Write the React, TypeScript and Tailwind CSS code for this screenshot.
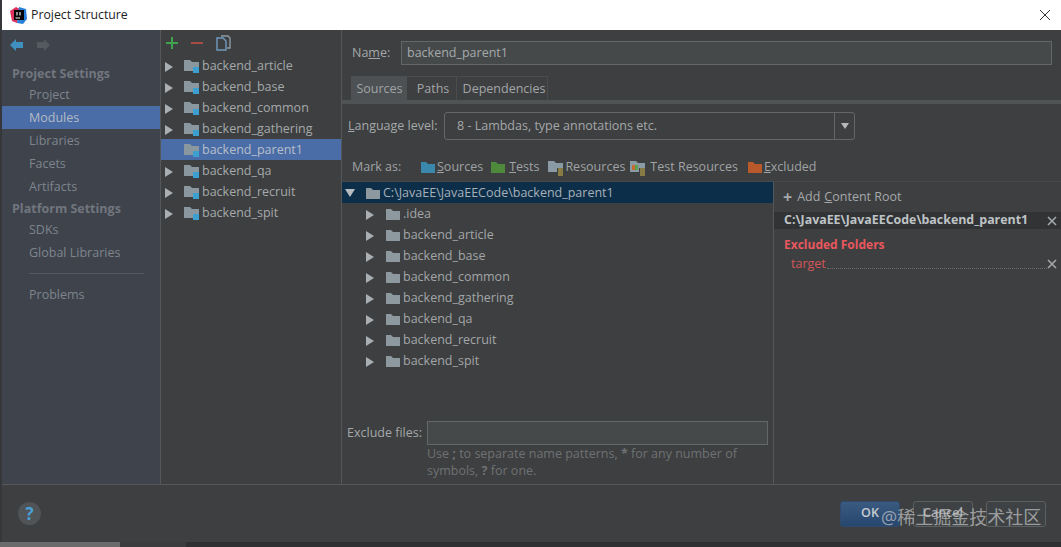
import React from "react";

function Folder({ color = "#8e989f" }: { color?: string }) {
  return (
    <svg width="16" height="13" viewBox="0 0 16 13" className="shrink-0">
      <path d="M1 1h5l2 2h7v9H1z" fill={color} />
    </svg>
  );
}

function ModuleFolder() {
  return (
    <svg width="16" height="15" viewBox="0 0 16 15" className="shrink-0">
      <path d="M0 1h6l2 2h7v9H0z" fill="#8a979f" />
      <rect x="9" y="8" width="6" height="6" fill="#3d9fd0" />
    </svg>
  );
}

function Resource({ test }: { test?: boolean }) {
  return (
    <svg width="16" height="16" viewBox="0 0 16 16" className="shrink-0">
      <path d="M0 1h6l2 2h7v9H0z" fill="#8b9ba5" />
      {test ? <rect x="2" y="5" width="3" height="5" fill="#c76a35" /> : null}
      {test ? <rect x="5" y="5" width="3" height="5" fill="#59a14f" /> : null}
      <rect x="9" y="8" width="6" height="8" fill="#3c3f41" />
      <path d="M10 9h5M10 11h5M10 13h5M10 15h5" stroke="#d6b84a" strokeWidth="1" />
    </svg>
  );
}

function Arrow({ down, className = "" }: { down?: boolean; className?: string }) {
  return (
    <svg width="10" height="10" viewBox="0 0 10 10" className={"shrink-0 " + className}>
      {down ? <path d="M0 1h10L5 9z" fill="#b6bcc0" /> : <path d="M1 0l8 5-8 5z" fill="#a9afb3" />}
    </svg>
  );
}

function SideItem({ label, active }: { label: string; active?: boolean }) {
  return (
    <div className={"h-[23px] flex items-center pl-[27px] pt-[2px] " + (active ? "bg-[#4a6da7] text-[#b4bac4]" : "text-[#7f858d]")}>
      {label}
    </div>
  );
}

function SideHead({ label }: { label: string }) {
  return <div className="h-[20px] flex items-center pl-[10px] pt-[2px] font-bold text-[#71767e]">{label}</div>;
}

function ModuleRow({ label, active }: { label: string; active?: boolean }) {
  return (
    <div className={"h-[21px] flex items-center pt-[2px] " + (active ? "bg-[#4a6da7] text-[#b8bec8]" : "text-[#a5a9ab]")}>
      <div className="w-[23px] pl-[3px]">{active ? null : <Arrow />}</div>
      <ModuleFolder />
      <span className="ml-[2px]">{label}</span>
    </div>
  );
}

function TreeRow({ label }: { label: string }) {
  return (
    <div className="h-[21px] flex items-center pt-[2px] text-[#a3a6a8]">
      <div className="w-[43px] pl-[23px]"><Arrow /></div>
      <Folder />
      <span className="ml-[2px]">{label}</span>
    </div>
  );
}

function Mark({ icon, first, rest, className = "", gap = "ml-[1px]" }: { icon: React.ReactNode; first: string; rest: string; className?: string; gap?: string }) {
  return (
    <div className={"flex items-center " + className}>
      {icon}
      <span className={gap}><span className="underline">{first}</span>{rest}</span>
    </div>
  );
}

function Btn({ label, primary }: { label: string; primary?: boolean }) {
  return (
    <div className={"w-[60px] h-[26px] rounded-[3px] border flex items-center justify-center font-semibold " + (primary ? "bg-gradient-to-b from-[#3b5a80] to-[#27476e] border-[#2f4a6c] text-[#c6ccd2]" : "bg-[#3f4244] border-[#5c5f60] text-[#a9abac]")}>
      {label}
    </div>
  );
}

const modules = ["backend_article", "backend_base", "backend_common", "backend_gathering", "backend_parent1", "backend_qa", "backend_recruit", "backend_spit"];
const tree = [".idea", "backend_article", "backend_base", "backend_common", "backend_gathering", "backend_qa", "backend_recruit", "backend_spit"];

export default function App() {
  return (
    <div className="w-[1061px] h-[547px] overflow-hidden flex flex-col bg-[#3d3f40] text-[12.5px] leading-none relative" style={{ fontFamily: '"Open Sans", "Noto Sans CJK SC", sans-serif' }}>
      <div className="flex-1 flex min-h-0">
        <div className="w-[2px] bg-[#35373a]" />
        <div className="flex-1 flex flex-col min-w-0">
          <div className="h-[30px] bg-white flex items-center pl-[8px] pr-[8px] text-[#222]">
            <svg width="17" height="17" viewBox="0 0 17 17" className="shrink-0">
              <path d="M0 4l6-4 4 2-3 14-5-2z" fill="#e0315f" />
              <path d="M9 0l7 2 1 10-4 5-6-1z" fill="#2a7fd9" />
              <rect x="4" y="3" width="10" height="10" fill="#000" />
              <rect x="5.5" y="10.5" width="4.5" height="1" fill="#fff" />
              <path d="M7 5v3.5M10 5v3.5" stroke="#fff" strokeWidth="1.1" />
            </svg>
            <span className="ml-[4px] text-[12.3px]">Project Structure</span>
            <svg width="12" height="12" viewBox="0 0 12 12" className="ml-auto mr-[2px]">
              <path d="M1 1l10 10M11 1L1 11" stroke="#333" strokeWidth="1" fill="none" />
            </svg>
          </div>

          <div className="flex-1 flex min-h-0 border-b border-[#55585a]">
            <div className="w-[159px] shrink-0 bg-[#3e434c] border-r border-[#55585a] flex flex-col">
              <div className="h-[29px] flex items-center pl-[8px] gap-[12px]">
                <svg width="14" height="12" viewBox="0 0 14 12"><path d="M0 6l6-6v3h7v6H6v3z" fill="#3f8fc0" /></svg>
                <svg width="14" height="12" viewBox="0 0 14 12"><path d="M14 6L8 0v3H1v6h7v3z" fill="#555a60" /></svg>
              </div>
              <div className="mt-[4px]"><SideHead label="Project Settings" /></div>
              <SideItem label="Project" />
              <SideItem label="Modules" active />
              <SideItem label="Libraries" />
              <SideItem label="Facets" />
              <SideItem label="Artifacts" />
              <SideHead label="Platform Settings" />
              <SideItem label="SDKs" />
              <SideItem label="Global Libraries" />
              <div className="h-px bg-[#555a62] ml-[27px] mr-[16px] mt-[9px]" />
              <div className="mt-[9px]"><SideItem label="Problems" /></div>
            </div>

            <div className="w-[181px] shrink-0 border-r border-[#55585a] flex flex-col">
              <div className="h-[25px] flex items-center pl-[4px] gap-[11px]">
                <svg width="14" height="14" viewBox="0 0 14 14"><path d="M7 1v12M1 7h12" stroke="#3fa34d" strokeWidth="2" /></svg>
                <svg width="14" height="14" viewBox="0 0 14 14"><path d="M1 7h12" stroke="#a84b45" strokeWidth="2" /></svg>
                <svg width="16" height="16" viewBox="0 0 16 16">
                  <path d="M6 1h7l2 2v10h-3" fill="none" stroke="#8d9aa3" strokeWidth="1.4" />
                  <path d="M2 3h6l3 3v9H2z" fill="#3d3f40" stroke="#6f9bc0" strokeWidth="1.4" />
                </svg>
              </div>
              {modules.map((m) => <ModuleRow key={m} label={m} active={m === "backend_parent1"} />)}
            </div>

            <div className="flex-1 min-w-0 flex flex-col">
              <div className="flex items-center mt-[11px] pl-[10px] pr-[9px] text-[#a5a8aa]">
                <span className="w-[49px] pt-[1px]">Na<span className="underline">m</span>e:</span>
                <div className="flex-1 h-[24px] bg-[#45494a] border border-[#646768] flex items-center pl-[5px] pt-[1px] text-[#a5a9ab]">backend_parent1</div>
              </div>

              <div className="flex mt-[11px] ml-[9px] h-[24px] text-[#a3a6a8]">
                <div className="w-[56px] bg-[#4d5153] border border-[#4d5153] flex items-center justify-center pt-[2px] pl-[1px] text-[#a0a4a6]">Sources</div>
                <div className="w-[50px] border-t border-r border-[#4a4c4e] flex items-center justify-center pt-[2px] pl-[3px]">Paths</div>
                <div className="w-[91px] border-t border-r border-[#4a4c4e] flex items-center justify-center pt-[2px] pl-[4px]">Dependencies</div>
              </div>
              <div className="h-[4px] bg-[#505354]" />

              <div className="flex items-center mt-[8px] pl-[6px] text-[#a5a8aa]">
                <span className="w-[96px] pt-[1px]"><span className="underline">L</span>anguage level:</span>
                <div className="w-[411px] h-[28px] border border-[#646768] rounded-[3px] flex items-center">
                  <span className="flex-1 pl-[12px] pt-[1px]">8 - Lambdas, type annotations etc.</span>
                  <div className="w-[20px] h-full border-l border-[#646768] flex items-center justify-center">
                    <svg width="8" height="6" viewBox="0 0 8 6"><path d="M0 0h8L4 6z" fill="#b6b9bb" /></svg>
                  </div>
                </div>
              </div>

              <div className="flex items-center h-[20px] mt-[17px] pl-[10px] pt-[1px] text-[#a0a3a5]">
                <span className="w-[68px]">Mark as:</span>
                <Mark icon={<Folder color="#3b88ad" />} first="S" rest="ources" />
                <Mark className="ml-[7px]" gap="ml-[3px]" icon={<Folder color="#4f8a3c" />} first="T" rest="ests" />
                <Mark className="ml-[9px]" icon={<Resource />} first="" rest="Resources" />
                <Mark className="ml-[5px]" gap="ml-[4px]" icon={<Resource test />} first="" rest="Test Resources" />
                <Mark className="ml-[9px]" icon={<Folder color="#b8592c" />} first="E" rest="xcluded" />
              </div>

              <div className="flex-1 min-h-0 mt-[4px] flex border-t border-[#46494b]">
                <div className="w-[432px] shrink-0 border-r border-[#55585a] flex flex-col">
                  <div className="h-[21px] bg-[#0d2e49] flex items-center pt-[1px] text-[#a6b0b8]">
                    <div className="w-[23px] pl-[3px]"><Arrow down /></div>
                    <Folder />
                    <span className="ml-[2px]">C:\JavaEE\JavaEECode\backend_parent1</span>
                  </div>
                  {tree.map((t) => <TreeRow key={t} label={t} />)}
                  <div className="mt-auto flex items-center pl-[5px] pr-[5px] text-[#a5a8aa]">
                    <span className="w-[80px] shrink-0 pt-[1px]">Exclude files:</span>
                    <div className="flex-1 h-[24px] bg-[#45494a] border border-[#646768]" />
                  </div>
                  <div className="mb-[5px] ml-[85px] mr-[20px] text-[#6f7274] leading-[17px]">
                    Use <b>;</b> to separate name patterns, <b>*</b> for any number of symbols, <b>?</b> for one.
                  </div>
                </div>

                <div className="flex-1 min-w-0 flex flex-col">
                  <div className="h-[30px] flex items-center pl-[9px] text-[#a5a8aa]">
                    <span className="text-[16px] font-bold mr-[5px]">+</span>
                    Add <span className="underline ml-[4px]">C</span>ontent Root
                  </div>
                  <div className="h-[17px] bg-[#313335] flex items-center pl-[10px] pr-[4px] font-bold text-[12.4px] text-[#bfc3c5]">
                    <span className="flex-1 whitespace-nowrap">C:\JavaEE\JavaEECode\backend_parent1</span>
                    <svg width="10" height="10" viewBox="0 0 10 10"><path d="M1 1l8 8M9 1L1 9" stroke="#a5a8aa" strokeWidth="1.6" /></svg>
                  </div>
                  <div className="mt-[10px] pl-[10px] font-bold text-[#e8585e] text-[12px]">Excluded Folders</div>
                  <div className="mt-[7px] flex items-center pl-[17px] pr-[4px] text-[#d4565a]">
                    <span>target</span>
                    <div className="flex-1 ml-[1px] mt-[8px] border-b border-dotted border-[#6a6d6f]" />
                    <svg width="10" height="10" viewBox="0 0 10 10"><path d="M1 1l8 8M9 1L1 9" stroke="#a5a8aa" strokeWidth="1.6" /></svg>
                  </div>
                </div>
              </div>
            </div>
          </div>

          <div className="h-[57px] flex items-center pl-[16px] pr-[15px] gap-[13px]">
            <div className="w-[23px] h-[23px] rounded-full bg-[#505456] flex items-center justify-center text-[#4aa0d8] font-bold text-[17px] mr-auto">?</div>
            <Btn label="OK" primary />
            <Btn label="Cancel" />
            <Btn label="" />
          </div>
        </div>
      </div>

      <div className="h-[5px] flex shrink-0 bg-[#2f3031]">
        <div className="w-[120px] bg-[#6b6b6b]" />
        <div className="w-[66px] bg-[#3a3c3d]" />
      </div>

      <div className="absolute left-[881px] top-[508px] text-[18px] text-[#c4c6c8]/70 whitespace-nowrap">@稀土掘金技术社区</div>
    </div>
  );
}
